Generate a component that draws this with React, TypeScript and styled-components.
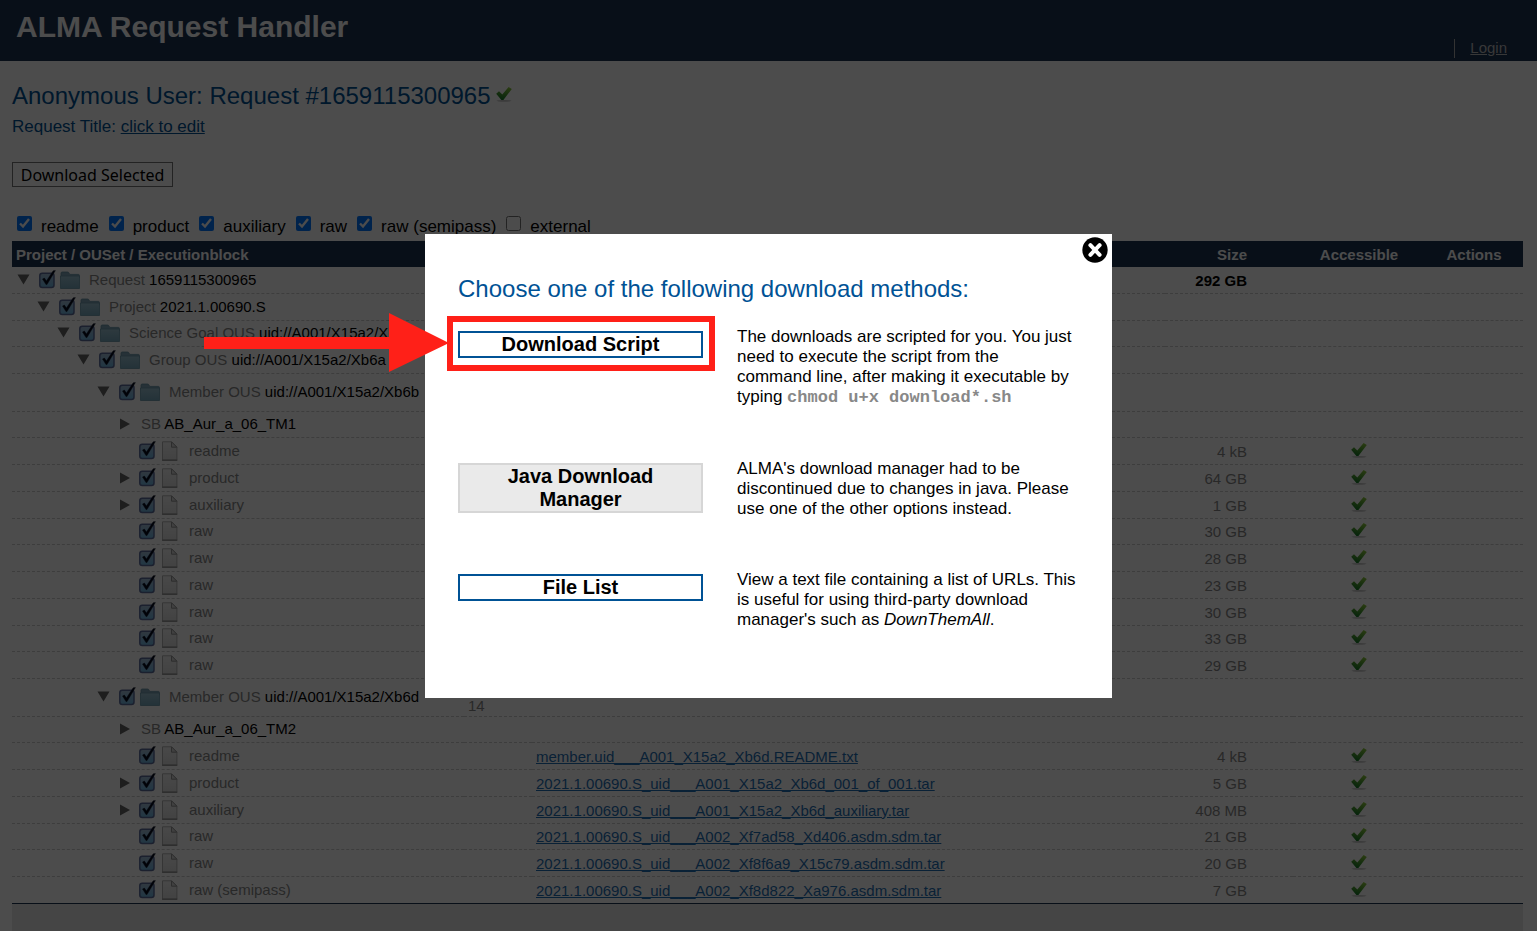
import React, { useState } from "react";
import styled, { createGlobalStyle } from "styled-components";

const navy = "#1b3253";
const blue = "#005295";
const grey = "#888888";
const red = "#ff2018";
const sans = '"Liberation Sans", Arial, Helvetica, sans-serif';

const GlobalStyle = createGlobalStyle`
  *, *::before, *::after { box-sizing: border-box; }
  body { margin: 0; background: #ffffff; color: #000000; font-family: ${sans}; }
  button, input { font-family: inherit; margin: 0; }
`;

const Page = styled.div`
  display: flex;
  flex-direction: column;
  min-height: 100vh;
`;

const Header = styled.header`
  display: flex;
  justify-content: space-between;
  height: 61px;
  padding: 0 30px 0 16px;
  background: ${navy};
  color: #ffffff;
`;

const SiteTitle = styled.h1`
  margin: 0;
  padding-top: 10px;
  font-size: 30px;
  line-height: 34px;
`;

const UserNav = styled.nav`
  align-self: flex-end;
  margin-bottom: 3px;
  padding-left: 15px;
  border-left: 1px solid #aaaaaa;
  font-size: 15px;
  line-height: 18px;
  padding-bottom: 1px;
`;

const LoginLink = styled.a`
  color: #bbbbbb;
`;

const Main = styled.main`
  flex: 1;
  display: flex;
  flex-direction: column;
  align-items: flex-start;
  padding: 21px 14px 0 12px;
`;

const RequestHeading = styled.h2`
  display: flex;
  align-items: flex-start;
  gap: 4px;
  margin: 0;
  color: ${blue};
  font-size: 24px;
  font-weight: normal;
  line-height: 28px;

  svg { margin-top: 4px; }
`;

const RequestTitle = styled.p`
  margin: 7px 0 0;
  color: ${blue};
  font-size: 17px;
  line-height: 20px;
`;

const InlineLink = styled.a`
  color: ${blue};
`;

const DownloadSelected = styled.button`
  height: 25px;
  min-width: 161px;
  margin-top: 25px;
  padding: 0 7px;
  border: 1px solid #767676;
  background: transparent;
  color: #000000;
  font: 16px/22px "Noto Sans", sans-serif;
`;

const Filters = styled.div`
  display: flex;
  gap: 10px;
  margin-top: 29px;
  padding-left: 5px;
`;

const FilterLabel = styled.label`
  display: flex;
  align-items: flex-start;
  gap: 9px;
  font-size: 17px;
  line-height: 22px;
`;

const FilterBox = styled.input`
  width: 15px;
  height: 15px;
`;

const Table = styled.table`
  width: 100%;
  margin-top: 3px;
  border-collapse: separate;
  border-spacing: 0;
  table-layout: fixed;
  font-size: 15px;
  line-height: 18px;
`;

const HeadCell = styled.th<{ $align?: string; $width?: number; $end?: number }>`
  width: ${(p) => (p.$width ? `${p.$width}px` : "auto")};
  height: 26px;
  padding: 2px ${(p) => p.$end ?? 4}px 0 4px;
  background: ${navy};
  color: #ffffff;
  text-align: ${(p) => p.$align ?? "left"};
`;

const Row = styled.tr<{ $height: number }>`
  height: ${(p) => p.$height}px;

  &:last-child > td {
    border-bottom: 1px solid ${navy};
  }
`;

const Cell = styled.td`
  padding: 1px 4px 0;
  border-bottom: 1px dashed #cccccc;
  color: ${grey};
`;

const TreeCell = styled(Cell)<{ $level: number }>`
  padding: 0 0 1px ${(p) => 5 + 20 * p.$level}px;
`;

const CountCell = styled(Cell)`
  padding-bottom: 1px;
  vertical-align: bottom;
`;

const SizeCell = styled(Cell)<{ $total?: boolean }>`
  padding-right: 46px;
  color: ${(p) => (p.$total ? "#000000" : grey)};
  font-weight: ${(p) => (p.$total ? "bold" : "normal")};
  text-align: right;
`;

const AccessCell = styled(Cell)`
  padding: 0 6px 2px 4px;
  text-align: center;

  svg { display: block; margin: 0 auto; }
`;

const TreeItem = styled.div`
  display: flex;
  align-items: center;
  white-space: nowrap;
`;

const Toggle = styled.button`
  display: flex;
  width: 22px;
  padding: 0;
  border: 0;
  background: none;
`;

const ToggleSpace = styled.span`
  width: 22px;
`;

const Tick = styled.label`
  position: relative;
  display: flex;
  width: 21px;

  input {
    position: absolute;
    inset: 0;
    opacity: 0;
  }
`;

const NodeIcon = styled.span`
  display: flex;
  width: 28px;
`;

const NodeText = styled.span<{ $bare?: boolean }>`
  padding-left: ${(p) => (p.$bare ? 2 : 1)}px;
`;

const NodeId = styled.span`
  color: #000000;
`;

const FileLink = styled.a`
  color: #1f6fb5;
`;

const TableFooter = styled.div`
  flex: 1;
  align-self: stretch;
  background: #e8e8e8;
`;

const Overlay = styled.div`
  position: fixed;
  inset: 0;
  display: flex;
  align-items: center;
  justify-content: center;
  background: rgba(0, 0, 0, 0.7);
`;

const Dialog = styled.section`
  position: relative;
  width: 687px;
  max-width: 100%;
  padding: 41px 34px 68px 33px;
  background: #ffffff;
`;

const CloseButton = styled.button`
  position: absolute;
  top: 3px;
  right: 4px;
  display: flex;
  padding: 0;
  border: 0;
  background: none;
`;

const DialogTitle = styled.h2`
  margin: 0 0 24px;
  color: ${blue};
  font-size: 24px;
  font-weight: normal;
  line-height: 28px;
`;

const Methods = styled.div`
  display: grid;
  grid-template-columns: 245px 1fr;
  gap: 51px 34px;
`;

const MethodAction = styled.div`
  position: relative;
  align-self: start;
  margin-top: 4px;
`;

const MethodButton = styled.button`
  display: block;
  width: 100%;
  padding: 0 36px;
  border: 2px solid ${blue};
  background: #ffffff;
  color: #000000;
  font-size: 20px;
  font-weight: bold;
  line-height: 23px;

  &:disabled {
    border-color: #d6d6d6;
    background: #eaeaea;
  }
`;

const MethodText = styled.p`
  margin: 0;
  font-size: 17px;
  line-height: 20px;

  code {
    color: #888888;
    font-family: "Liberation Mono", "Courier New", monospace;
    font-size: 17px;
    font-weight: bold;
  }
`;

const Highlight = styled.div`
  position: absolute;
  inset: -15px -12px -13px -11px;
  border: 6px solid ${red};
  pointer-events: none;
`;

const Pointer = styled.svg`
  position: absolute;
  top: -18px;
  right: calc(100% + 9px);
  pointer-events: none;
`;

const ArrowDown = () => (
  <svg width="13" height="12" viewBox="0 0 13 12" aria-hidden="true">
    <path d="M0.5 0.5H12.5L6.5 10.5Z" fill="#666666" />
  </svg>
);

const ArrowRight = () => (
  <svg width="13" height="12" viewBox="0 0 13 12" aria-hidden="true">
    <path d="M3 0.5V11.5L13 6Z" fill="#666666" />
  </svg>
);

const TickBox = () => (
  <svg width="17" height="20" viewBox="0 0 17 20" aria-hidden="true">
    <rect x="0.8" y="3.2" width="14.2" height="14.2" rx="2.5" fill="url(#tickFill)" stroke="#5c6c9c" strokeWidth="1.5" />
    <path d="M3.5 9L5.4 8L7.4 11L14.2 0.8L16.4 0.6L8 14.6H7Z" fill="#050a1c" stroke="#050a1c" strokeWidth="0.4" />
  </svg>
);

const Folder = () => (
  <svg width="20" height="20" viewBox="0 0 20 20" aria-hidden="true">
    <path d="M1 5V3.2Q1 2 2.2 2H7.6Q8.6 2 9 3L9.6 4.4H18.4Q19.4 4.4 19.4 5.4V8H1Z" fill="#7fa6b8" stroke="#6490a4" strokeWidth="0.8" />
    <path d="M0.5 6H19.5V18.5H0.5Z" fill="url(#folderFill)" stroke="#6795a8" strokeWidth="0.8" />
  </svg>
);

const FileIcon = () => (
  <svg width="20" height="20" viewBox="0 0 20 20" aria-hidden="true">
    <path d="M2.5 0.8H11.5L16.9 6.2V19H2.5Z" fill="url(#fileFill)" stroke="#b2b2b2" />
    <path d="M11.5 0.8V6.2H16.9Z" fill="#d9d9d9" stroke="#969696" />
    <path d="M2 19.2H17.4" stroke="#808080" />
  </svg>
);

const GreenCheck = () => (
  <svg width="18" height="17" viewBox="0 0 18 17" aria-hidden="true">
    <ellipse cx="9" cy="14.8" rx="7.5" ry="0.9" fill="#c4c4c4" />
    <path d="M1.2 7.8L4 5.2L7.3 8.4L13.6 1L16.8 3L8.4 14H6.4Z" fill="url(#checkFill)" />
  </svg>
);

const Gradients = () => (
  <svg width="0" height="0" aria-hidden="true" display="block">
    <defs>
      <linearGradient id="tickFill" x1="0" y1="0" x2="0" y2="1">
        <stop offset="0" stopColor="#a4bcd4" />
        <stop offset="1" stopColor="#70b8e4" />
      </linearGradient>
      <linearGradient id="folderFill" x1="0" y1="0" x2="0" y2="1">
        <stop offset="0" stopColor="#9cc2d2" />
        <stop offset="1" stopColor="#76a8bd" />
      </linearGradient>
      <linearGradient id="fileFill" x1="0" y1="0" x2="0" y2="1">
        <stop offset="0" stopColor="#f4f4f4" />
        <stop offset="1" stopColor="#dedede" />
      </linearGradient>
      <linearGradient id="checkFill" x1="0.7" y1="0" x2="0.4" y2="1">
        <stop offset="0" stopColor="#8cc83c" />
        <stop offset="1" stopColor="#147828" />
      </linearGradient>
    </defs>
  </svg>
);

type Node = {
  level: number;
  label: string;
  id?: string;
  kind: "folder" | "block" | "file";
  expandable?: boolean;
  height?: number;
  count?: string;
  file?: string;
  size?: string;
};

const file = (label: string, size: string, name = "", expandable = false, height = 27): Node => ({
  level: 5, kind: "file", label, size, file: name, expandable, height,
});

const nodes: Node[] = [
  { level: 0, kind: "folder", label: "Request", id: "1659115300965", size: "292 GB" },
  { level: 1, kind: "folder", label: "Project", id: "2021.1.00690.S" },
  { level: 2, kind: "folder", label: "Science Goal OUS", id: "uid://A001/X15a2/Xb69", height: 26 },
  { level: 3, kind: "folder", label: "Group OUS", id: "uid://A001/X15a2/Xb6a" },
  { level: 4, kind: "folder", label: "Member OUS", id: "uid://A001/X15a2/Xb6b", height: 38 },
  { level: 5, kind: "block", label: "SB", id: "AB_Aur_a_06_TM1", height: 26 },
  file("readme", "4 kB"),
  file("product", "64 GB", "", true),
  file("auxiliary", "1 GB", "", true),
  file("raw", "30 GB", "", false, 26),
  file("raw", "28 GB"),
  file("raw", "23 GB"),
  file("raw", "30 GB"),
  file("raw", "33 GB", "", false, 26),
  file("raw", "29 GB"),
  { level: 4, kind: "folder", label: "Member OUS", id: "uid://A001/X15a2/Xb6d", height: 38, count: "14" },
  { level: 5, kind: "block", label: "SB", id: "AB_Aur_a_06_TM2", height: 26 },
  file("readme", "4 kB", "member.uid___A001_X15a2_Xb6d.README.txt"),
  file("product", "5 GB", "2021.1.00690.S_uid___A001_X15a2_Xb6d_001_of_001.tar", true),
  file("auxiliary", "408 MB", "2021.1.00690.S_uid___A001_X15a2_Xb6d_auxiliary.tar", true),
  file("raw", "21 GB", "2021.1.00690.S_uid___A002_Xf7ad58_Xd406.asdm.sdm.tar", false, 26),
  file("raw", "20 GB", "2021.1.00690.S_uid___A002_Xf8f6a9_X15c79.asdm.sdm.tar"),
  file("raw (semipass)", "7 GB", "2021.1.00690.S_uid___A002_Xf8d822_Xa976.asdm.sdm.tar"),
];

const filters = [
  { name: "readme", on: true },
  { name: "product", on: true },
  { name: "auxiliary", on: true },
  { name: "raw", on: true },
  { name: "raw (semipass)", on: true },
  { name: "external", on: false },
];

function TreeRow({ node }: { node: Node }) {
  const isFile = node.kind === "file";
  const isBlock = node.kind === "block";
  return (
    <Row $height={node.height ?? 27}>
      <TreeCell $level={node.level}>
        <TreeItem>
          {!isFile || node.expandable ? (
            <Toggle type="button" aria-label={`Toggle ${node.label}`}>
              {node.kind === "folder" ? <ArrowDown /> : <ArrowRight />}
            </Toggle>
          ) : (
            <ToggleSpace />
          )}
          {!isBlock && (
            <>
              <Tick>
                <input type="checkbox" defaultChecked aria-label={`Select ${node.label}`} />
                <TickBox />
              </Tick>
              <NodeIcon>{isFile ? <FileIcon /> : <Folder />}</NodeIcon>
            </>
          )}
          <NodeText $bare={isBlock}>
            {node.label} {node.id && <NodeId>{node.id}</NodeId>}
          </NodeText>
        </TreeItem>
      </TreeCell>
      <CountCell>{node.count}</CountCell>
      <Cell>{node.file && <FileLink href="#">{node.file}</FileLink>}</Cell>
      <SizeCell $total={!isFile}>{node.size}</SizeCell>
      <AccessCell>{isFile && <GreenCheck />}</AccessCell>
      <Cell />
    </Row>
  );
}

function DownloadDialog({ onClose }: { onClose: () => void }) {
  return (
    <Overlay>
      <Dialog role="dialog" aria-labelledby="dialog-title">
        <CloseButton type="button" aria-label="Close" onClick={onClose}>
          <svg width="26" height="26" viewBox="0 0 26 26" aria-hidden="true">
            <circle cx="13" cy="13" r="12.7" fill="#000000" />
            <path d="M8.4 8.2L17.6 17.8M17.6 8.2L8.4 17.8" stroke="#ffffff" strokeWidth="4" strokeLinecap="round" />
          </svg>
        </CloseButton>
        <DialogTitle id="dialog-title">Choose one of the following download methods:</DialogTitle>
        <Methods>
          <MethodAction>
            <MethodButton type="button">Download Script</MethodButton>
            <Highlight />
            <Pointer width="245" height="60" viewBox="0 0 245 60" aria-hidden="true">
              <path d="M0 24H185V0L245 30L185 59V36H0Z" fill={red} />
            </Pointer>
          </MethodAction>
          <MethodText>
            The downloads are scripted for you. You just need to execute the script from the command
            line, after making it executable by typing <code>chmod u+x download*.sh</code>
          </MethodText>
          <MethodAction>
            <MethodButton type="button" disabled>Java Download Manager</MethodButton>
          </MethodAction>
          <MethodText>
            ALMA's download manager had to be discontinued due to changes in java. Please use one of
            the other options instead.
          </MethodText>
          <MethodAction>
            <MethodButton type="button">File List</MethodButton>
          </MethodAction>
          <MethodText>
            View a text file containing a list of URLs. This is useful for using third-party download
            manager's such as <em>DownThemAll</em>.
          </MethodText>
        </Methods>
      </Dialog>
    </Overlay>
  );
}

export default function App() {
  const [open, setOpen] = useState(true);
  return (
    <>
      <GlobalStyle />
      <Page>
        <Header>
          <SiteTitle>ALMA Request Handler</SiteTitle>
          <UserNav>
            <LoginLink href="#">Login</LoginLink>
          </UserNav>
        </Header>
        <Main>
          <RequestHeading>
            Anonymous User: Request #1659115300965 <GreenCheck />
          </RequestHeading>
          <RequestTitle>
            Request Title: <InlineLink href="#">click to edit</InlineLink>
          </RequestTitle>
          <DownloadSelected type="button" onClick={() => setOpen(true)}>
            Download Selected
          </DownloadSelected>
          <Filters>
            {filters.map((f) => (
              <FilterLabel key={f.name}>
                <FilterBox type="checkbox" defaultChecked={f.on} />
                {f.name}
              </FilterLabel>
            ))}
          </Filters>
          <Table>
            <thead>
              <tr>
                <HeadCell $width={452}>Project / OUSet / Executionblock</HeadCell>
                <HeadCell $width={68} />
                <HeadCell />
                <HeadCell $width={128} $align="right" $end={46}>Size</HeadCell>
                <HeadCell $width={134} $align="center" $end={6}>Accessible</HeadCell>
                <HeadCell $width={96} $align="center" $end={6}>Actions</HeadCell>
              </tr>
            </thead>
            <tbody>
              {nodes.map((n, i) => (
                <TreeRow key={i} node={n} />
              ))}
            </tbody>
          </Table>
          <TableFooter />
        </Main>
      </Page>
      {open && <DownloadDialog onClose={() => setOpen(false)} />}
      <Gradients />
    </>
  );
}
